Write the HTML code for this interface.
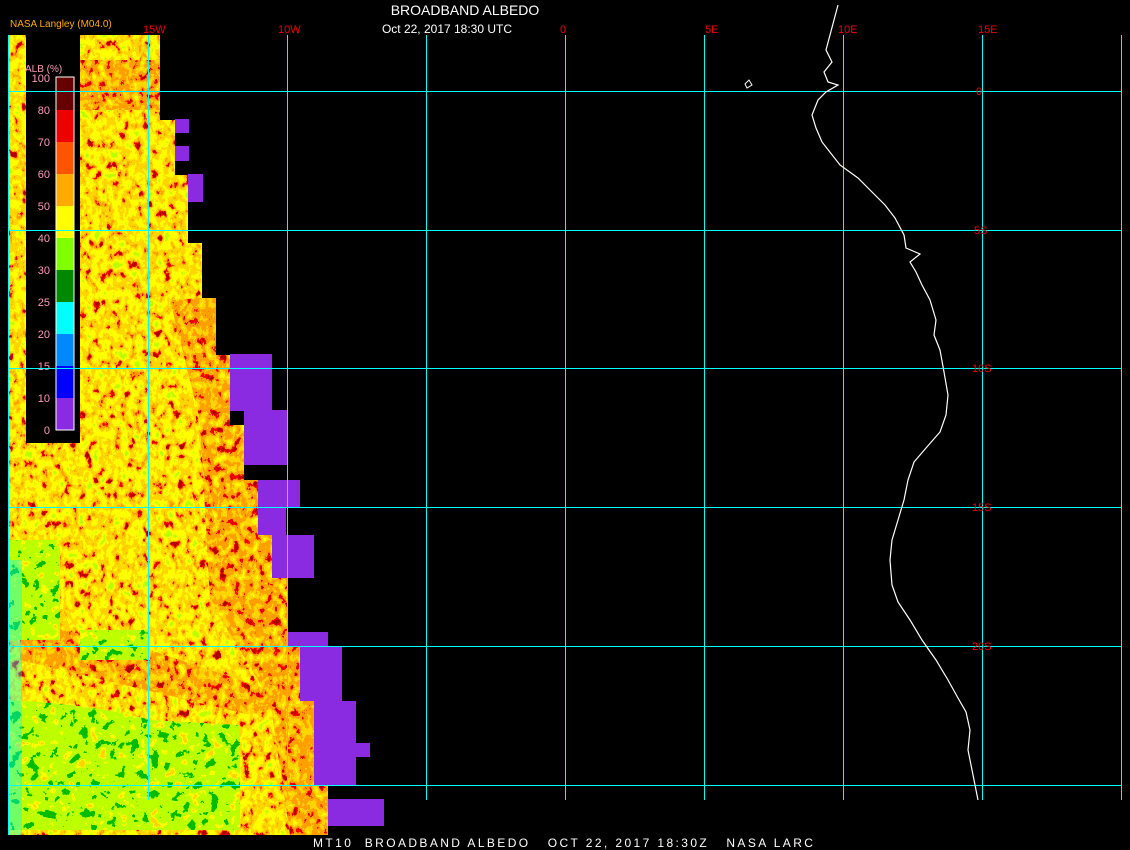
<!DOCTYPE html>
<html><head><meta charset="utf-8"><style>
html,body{margin:0;padding:0;background:#000;width:1130px;height:850px;overflow:hidden}
svg{display:block}
text{font-family:"Liberation Sans",sans-serif}
</style></head><body>
<svg width="1130" height="850" viewBox="0 0 1130 850" xmlns="http://www.w3.org/2000/svg">
<defs>
<filter id="cl" x="0" y="0" width="100%" height="100%">
<feTurbulence type="fractalNoise" baseFrequency="0.14 0.1" numOctaves="4" seed="4"/>
<feColorMatrix type="matrix" values="0.33 0.33 0.33 0 0 0.33 0.33 0.33 0 0 0.33 0.33 0.33 0 0 0 0 0 0 1"/>
<feComponentTransfer>
<feFuncR type="linear" slope="2.5" intercept="-0.75"/>
<feFuncG type="linear" slope="2.5" intercept="-0.75"/>
<feFuncB type="linear" slope="2.5" intercept="-0.75"/>
</feComponentTransfer>
<feComponentTransfer>
<feFuncR type="discrete" tableValues="0.5 1 1 1 1 1 1 0.9 0.4"/>
<feFuncG type="discrete" tableValues="1 1 1 1 0.67 0.67 0.35 0 0"/>
<feFuncB type="discrete" tableValues="0 0 0 0 0 0 0 0 0"/>
<feFuncA type="discrete" tableValues="1"/>
</feComponentTransfer>
</filter>
<filter id="rd" x="0" y="0" width="100%" height="100%">
<feTurbulence type="fractalNoise" baseFrequency="0.15 0.11" numOctaves="4" seed="12"/>
<feColorMatrix type="matrix" values="0.33 0.33 0.33 0 0 0.33 0.33 0.33 0 0 0.33 0.33 0.33 0 0 0 0 0 0 1"/>
<feComponentTransfer>
<feFuncR type="linear" slope="2.5" intercept="-0.75"/>
<feFuncG type="linear" slope="2.5" intercept="-0.75"/>
<feFuncB type="linear" slope="2.5" intercept="-0.75"/>
</feComponentTransfer>
<feComponentTransfer>
<feFuncR type="discrete" tableValues="1 1 1 1 1 0.9 0.4"/>
<feFuncG type="discrete" tableValues="1 0.67 0.67 0.35 0.35 0 0"/>
<feFuncB type="discrete" tableValues="0 0 0 0 0 0 0"/>
<feFuncA type="discrete" tableValues="1"/>
</feComponentTransfer>
</filter>
<filter id="gr" x="0" y="0" width="100%" height="100%">
<feTurbulence type="fractalNoise" baseFrequency="0.1" numOctaves="4" seed="9"/>
<feColorMatrix type="matrix" values="0.33 0.33 0.33 0 0 0.33 0.33 0.33 0 0 0.33 0.33 0.33 0 0 0 0 0 0 1"/>
<feComponentTransfer>
<feFuncR type="linear" slope="2.5" intercept="-0.75"/>
<feFuncG type="linear" slope="2.5" intercept="-0.75"/>
<feFuncB type="linear" slope="2.5" intercept="-0.75"/>
</feComponentTransfer>
<feComponentTransfer>
<feFuncR type="discrete" tableValues="0 0 0.5 0.5 0.5 1 1"/>
<feFuncG type="discrete" tableValues="0.5 0.5 1 1 1 1 0.67"/>
<feFuncB type="discrete" tableValues="0 0 0 0 0 0 0"/>
<feFuncA type="discrete" tableValues="1"/>
</feComponentTransfer>
</filter>
<clipPath id="dc">
<path d="M8 35 H160 V120 H175 V175 H188 V243 H202 V298 H216 V355 H230 V425 H244 V480 H258 V535 H272 V578 H287 V632 H300 V700 H314 V770 H328 V835 H8 Z"/>
</clipPath>
<clipPath id="rc">
<path d="M170 300 L202 298 H216 V355 H230 V425 H244 V480 H258 V535 H272 V578 H287 V632 H300 V700 H314 V770 H328 V835 H290 L270 700 L210 600 L200 420 Z M20 620 L150 650 L300 700 L250 715 L20 660 Z M80 60 H160 V110 H80 Z"/>
</clipPath>
<clipPath id="gc"><path d="M8 700 Q100 705 150 720 L240 725 V830 H8 Z M8 540 H60 V640 H8 Z M80 630 H150 V660 H80 Z"/></clipPath>
</defs>
<g clip-path="url(#dc)">
<rect x="8" y="35" width="330" height="800" filter="url(#cl)"/>
</g>
<g clip-path="url(#rc)"><rect x="8" y="40" width="330" height="800" filter="url(#rd)"/></g>
<g clip-path="url(#gc)"><rect x="8" y="540" width="240" height="300" filter="url(#gr)"/></g>
<rect x="8" y="560" width="14" height="275" fill="#0ff" opacity="0.4"/>
<g fill="#8a2be2">
<rect x="175" y="119" width="14" height="14"/><rect x="175" y="146" width="14" height="15"/>
<rect x="188" y="174" width="15" height="28"/>
<rect x="230" y="354" width="42" height="57"/><rect x="244" y="410" width="43" height="55"/>
<rect x="258" y="480" width="42" height="27"/><rect x="258" y="507" width="28" height="28"/>
<rect x="272" y="535" width="42" height="43"/>
<rect x="287" y="632" width="41" height="14"/><rect x="300" y="646" width="42" height="55"/>
<rect x="314" y="701" width="42" height="42"/><rect x="314" y="743" width="56" height="14"/>
<rect x="314" y="757" width="42" height="28"/><rect x="328" y="799" width="56" height="27"/>
</g>
<rect x="26" y="35" width="54" height="408" fill="#000"/>
<g>
<rect x="56" y="77" width="18" height="33" fill="#600"/>
<rect x="56" y="110" width="18" height="32" fill="#e00"/>
<rect x="56" y="142" width="18" height="32" fill="#f50"/>
<rect x="56" y="174" width="18" height="32" fill="#fa0"/>
<rect x="56" y="206" width="18" height="32" fill="#ff0"/>
<rect x="56" y="238" width="18" height="32" fill="#80ff00"/>
<rect x="56" y="270" width="18" height="32" fill="#080"/>
<rect x="56" y="302" width="18" height="32" fill="#0ff"/>
<rect x="56" y="334" width="18" height="32" fill="#08f"/>
<rect x="56" y="366" width="18" height="32" fill="#00f"/>
<rect x="56" y="398" width="18" height="32" fill="#8a2be2"/>
<rect x="56" y="77" width="18" height="353" fill="none" stroke="#fff" stroke-width="1"/>
</g>
<g fill="#f9b" font-size="11" text-anchor="end">
<text x="50" y="82">100</text><text x="50" y="114">80</text><text x="50" y="146">70</text>
<text x="50" y="178">60</text><text x="50" y="210">50</text><text x="50" y="242">40</text>
<text x="50" y="274">30</text><text x="50" y="306">25</text><text x="50" y="338">20</text>
<text x="50" y="370">15</text><text x="50" y="402">10</text><text x="50" y="434">0</text>
</g>
<text x="25" y="72" fill="#f9b" font-size="10">ALB (%)</text>
<text x="10" y="27" fill="#fa0" font-size="10">NASA Langley (M04.0)</text>
<g stroke="#0ff" stroke-width="1">
<line x1="8.5" y1="35" x2="8.5" y2="835"/>
<line x1="148.5" y1="35" x2="148.5" y2="800"/><line x1="287.5" y1="35" x2="287.5" y2="800"/>
<line x1="426.5" y1="35" x2="426.5" y2="800"/><line x1="565.5" y1="35" x2="565.5" y2="800"/>
<line x1="704.5" y1="35" x2="704.5" y2="800"/><line x1="843.5" y1="35" x2="843.5" y2="800"/>
<line x1="982.5" y1="35" x2="982.5" y2="800"/><line x1="1121.5" y1="35" x2="1121.5" y2="800"/>
<line x1="8" y1="91.5" x2="1121" y2="91.5"/><line x1="8" y1="230.5" x2="1121" y2="230.5"/>
<line x1="8" y1="368.5" x2="1121" y2="368.5"/><line x1="8" y1="507.5" x2="1121" y2="507.5"/>
<line x1="8" y1="646.5" x2="1121" y2="646.5"/><line x1="8" y1="785.5" x2="1121" y2="785.5"/>
</g>
<polyline fill="none" stroke="#fff" stroke-width="1.2" points="838,5 834,20 830,35 826,50 832,62 824,72 828,82 838,85 826,92 818,100 812,115 816,128 822,142 840,165 858,178 870,190 885,205 895,218 904,235 906,248 920,254 910,262 916,272 922,285 930,300 936,320 934,335 940,350 944,372 948,395 946,415 940,432 926,448 914,462 908,480 904,500 898,520 892,540 890,560 892,585 898,602 910,620 922,640 936,660 948,680 958,698 966,712 970,730 968,750 972,770 978,800"/>
<path d="M745 84 L749 80 L752 85 L747 88 Z" fill="none" stroke="#fff"/>
<g fill="#e00" font-size="11" font-family="Liberation Mono, monospace">
<text x="143" y="33">15W</text><text x="278" y="33">10W</text><text x="560" y="33">0</text>
<text x="705" y="33">5E</text><text x="838" y="33">10E</text><text x="978" y="33">15E</text>
<text x="976" y="95">0</text><text x="974" y="234">5S</text><text x="972" y="372">10S</text>
<text x="972" y="511">15S</text><text x="972" y="650">20S</text>
</g>
<text x="465" y="15" fill="#fff" font-size="14" text-anchor="middle">BROADBAND ALBEDO</text>
<text x="447" y="33" fill="#fff" font-size="12" text-anchor="middle">Oct 22, 2017 18:30 UTC</text>
<text x="313" y="847" fill="#fff" font-size="12" font-family="Liberation Mono, monospace" letter-spacing="2.4" style="white-space:pre" xml:space="preserve">MT10  BROADBAND ALBEDO   OCT 22, 2017 18:30Z   NASA LARC</text>
</svg>
</body></html>
